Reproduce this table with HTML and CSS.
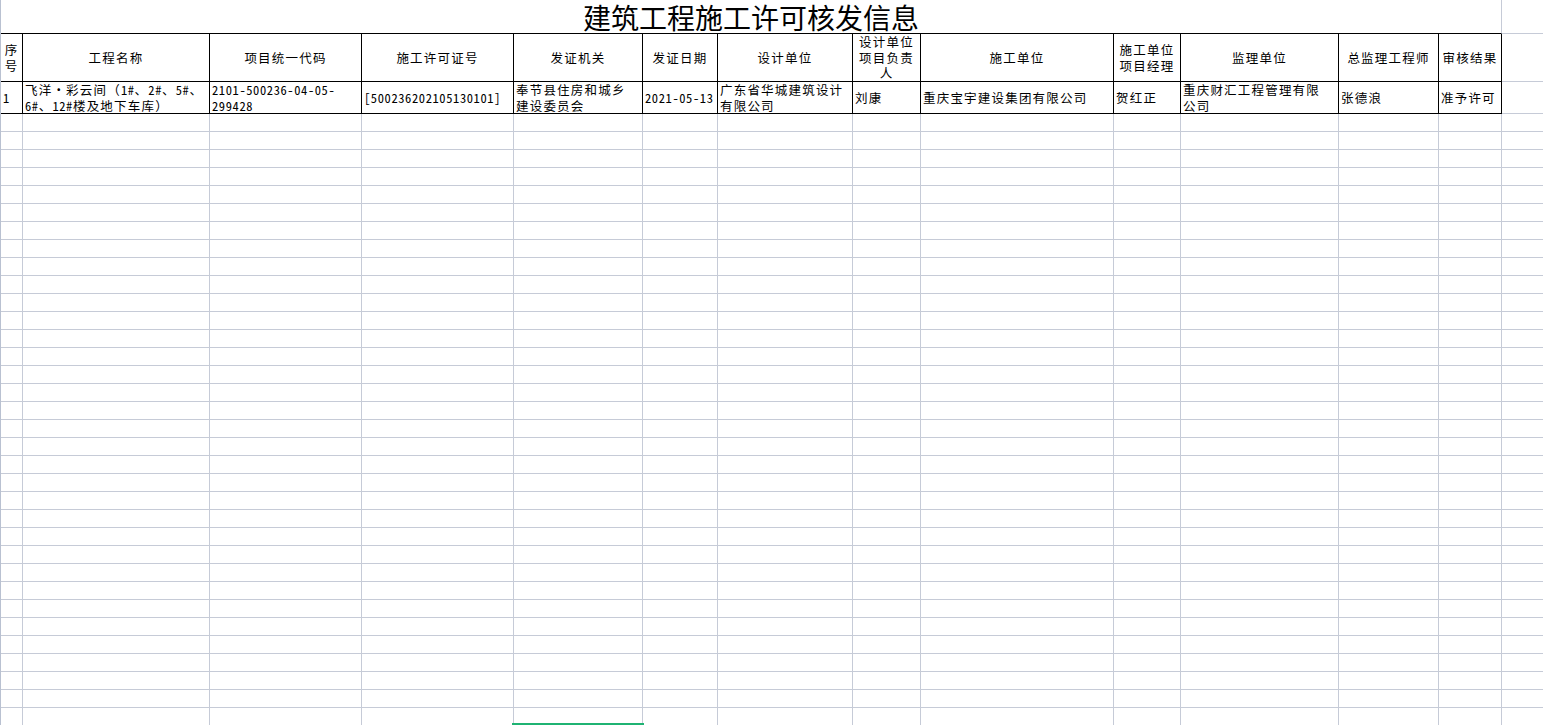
FILE: index.html
```html
<!DOCTYPE html>
<html lang="zh-CN">
<head>
<meta charset="utf-8">
<title>建筑工程施工许可核发信息</title>
<link rel="stylesheet" href="styles.css">
</head>
<body>
<div class="sheet">
  <div class="cell title">建筑工程施工许可核发信息</div>
  <div class="cell extra"></div>

  <div class="cell head">序<br>号</div>
  <div class="cell head">工程名称</div>
  <div class="cell head">项目统一代码</div>
  <div class="cell head">施工许可证号</div>
  <div class="cell head">发证机关</div>
  <div class="cell head">发证日期</div>
  <div class="cell head">设计单位</div>
  <div class="cell head tight">设计单位<br>项目负责<br>人</div>
  <div class="cell head">施工单位</div>
  <div class="cell head">施工单位<br>项目经理</div>
  <div class="cell head">监理单位</div>
  <div class="cell head">总监理工程师</div>
  <div class="cell head">审核结果</div>
  <div class="cell extra"></div>

  <div class="cell data"><span class="lat">1</span></div>
  <div class="cell data"><span>飞洋·彩云间（<span class="lat">1#</span>、<span class="lat">2#</span>、<span class="lat">5#</span>、<br><span class="lat">6#</span>、<span class="lat">12#</span>楼及地下车库）</span></div>
  <div class="cell data"><span class="lat">2101-500236-04-05-<br>299428</span></div>
  <div class="cell data"><span class="lat">[500236202105130101]</span></div>
  <div class="cell data"><span>奉节县住房和城乡<br>建设委员会</span></div>
  <div class="cell data"><span class="lat">2021-05-13</span></div>
  <div class="cell data"><span>广东省华城建筑设计<br>有限公司</span></div>
  <div class="cell data">刘康</div>
  <div class="cell data">重庆宝宇建设集团有限公司</div>
  <div class="cell data">贺红正</div>
  <div class="cell data"><span>重庆财汇工程管理有限<br>公司</span></div>
  <div class="cell data">张德浪</div>
  <div class="cell data">准予许可</div>
  <div class="cell extra"></div>

  <div class="col"></div>
  <div class="col"></div>
  <div class="col"></div>
  <div class="col"></div>
  <div class="col"></div>
  <div class="col"></div>
  <div class="col"></div>
  <div class="col"></div>
  <div class="col"></div>
  <div class="col"></div>
  <div class="col"></div>
  <div class="col"></div>
  <div class="col"></div>
  <div class="col"></div>
</div>
<div class="selection"></div>
</body>
</html>
```

FILE: styles.css
```css
* {
  box-sizing: border-box;
  margin: 0;
  padding: 0;
}

html,
body {
  width: 1543px;
  height: 725px;
  overflow: hidden;
  background: #ffffff;
}

body {
  position: relative;
  font-family: "Noto Sans Mono CJK SC", "Noto Sans CJK SC", "DejaVu Sans", sans-serif;
  font-size: 12.5px;
  letter-spacing: 1.2px;
  color: #000000;
}

.sheet {
  display: grid;
  grid-template-columns: 22px 187px 152px 152px 129px 75px 135px 68px 193px 67px 158px 100px 63px 72px;
  grid-template-rows: 34px 48px 32px 640px;
  width: max-content;
  border-left: 1px solid #b9c1d1;
}

.cell {
  display: flex;
  align-items: center;
  border-right: 1px solid #000000;
  border-bottom: 1px solid #000000;
  line-height: 15.5px;
  white-space: nowrap;
}

.lat {
  letter-spacing: 0.6px;
}

.title {
  grid-column: span 13;
  justify-content: center;
  font-size: 28px;
  letter-spacing: 0;
  line-height: 32px;
  padding-top: 1px;
  border-right-color: #c6cbd7;
}

.head {
  justify-content: center;
  text-align: center;
}

.tight {
  line-height: 15.5px;
}

.data {
  padding-left: 2px;
}

.extra {
  border-right: 1px solid #c6cbd7;
  border-bottom: 1px solid #c6cbd7;
}

.col {
  border-right: 1px solid #c6cbd7;
  background: repeating-linear-gradient(to bottom, transparent 0, transparent 17px, #c6cbd7 17px, #c6cbd7 18px);
}

.selection {
  position: absolute;
  left: 512px;
  top: 723px;
  width: 132px;
  height: 2px;
  background: #1fb373;
}
```
